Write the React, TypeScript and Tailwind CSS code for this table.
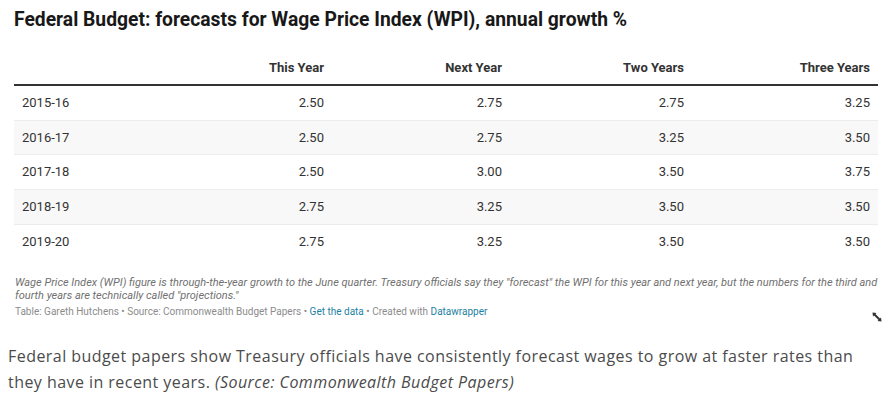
import React from "react";

const rows = [
  ["2015-16", "2.50", "2.75", "2.75", "3.25"],
  ["2016-17", "2.50", "2.75", "3.25", "3.50"],
  ["2017-18", "2.50", "3.00", "3.50", "3.75"],
  ["2018-19", "2.75", "3.25", "3.50", "3.50"],
  ["2019-20", "2.75", "3.25", "3.50", "3.50"],
];

const cols = "grid grid-cols-[158px_160px_178px_182px_186px]";

export default function App() {
  return (
    <div className="w-[891px] h-[402px] bg-white overflow-hidden">
      <div className="px-[14px]">
        <div className="font-['Roboto',sans-serif]">
          <h1 className="pt-[8px] text-[19.3px] leading-[24px] font-bold text-[#181818]">
            Federal Budget: forecasts for Wage Price Index (WPI), annual growth %
          </h1>
          <div className="mt-[28px] w-[864px]">
            <div className={`${cols} border-b-2 border-[#333] text-[13px] font-bold text-[#333] leading-[16px] pb-[8px]`}>
              <div className="pl-2"></div>
              <div className="text-right pr-2">This Year</div>
              <div className="text-right pr-2">Next Year</div>
              <div className="text-right pr-2">Two Years</div>
              <div className="text-right pr-2">Three Years</div>
            </div>
            {rows.map((r, i) => (
              <div
                key={r[0]}
                className={`${cols} h-[34.7px] items-center text-[13px] text-[#333] ${i % 2 === 1 ? "bg-[#f8f8f8]" : "bg-white"} ${i < rows.length - 1 ? "border-b border-[#ececec]" : ""}`}
              >
                {r.map((c, j) => (
                  <div key={j} className={j === 0 ? "pl-2" : "text-right pr-2"}>
                    {c}
                  </div>
                ))}
              </div>
            ))}
          </div>
          <div className="mt-[17px] relative w-[864px]">
            <div className="italic text-[11px] leading-[13px] text-[#707070] pl-[1px]">
              <div className="whitespace-nowrap">
                Wage Price Index (WPI) figure is through-the-year growth to the June quarter. Treasury officials say they "forecast" the WPI for this year and next year, but the numbers for the third and
              </div>
              <div className="whitespace-nowrap">fourth years are technically called "projections."</div>
            </div>
            <p className="mt-[3px] text-[10px] leading-[13px] text-[#8c8c8c] pl-[1px]">
              Table: Gareth Hutchens • Source: Commonwealth Budget Papers •{" "}
              <span className="text-[#1d81a2]">Get the data</span> • Created with{" "}
              <span className="text-[#1d81a2]">Datawrapper</span>
            </p>
            <svg className="absolute right-[-4px] bottom-[-4px]" width="10" height="10" viewBox="0 0 10 10">
              <path d="M1.5 1.5 L8.5 8.5" stroke="#333" strokeWidth="2" />
              <path d="M0.5 0.5 L4.5 1 L1 4.5 Z" fill="#333" />
              <path d="M9.5 9.5 L5.5 9 L9 5.5 Z" fill="#333" />
            </svg>
          </div>
        </div>
      </div>
      <p className="mt-[25px] px-[8px] font-['Open_Sans',sans-serif] text-[16px] leading-[26px] text-[#4b4b4b] tracking-[0.45px]">
        Federal budget papers show Treasury officials have consistently forecast wages to grow at faster rates than they have in recent years.{" "}
        <em>(Source: Commonwealth Budget Papers)</em>
      </p>
    </div>
  );
}
